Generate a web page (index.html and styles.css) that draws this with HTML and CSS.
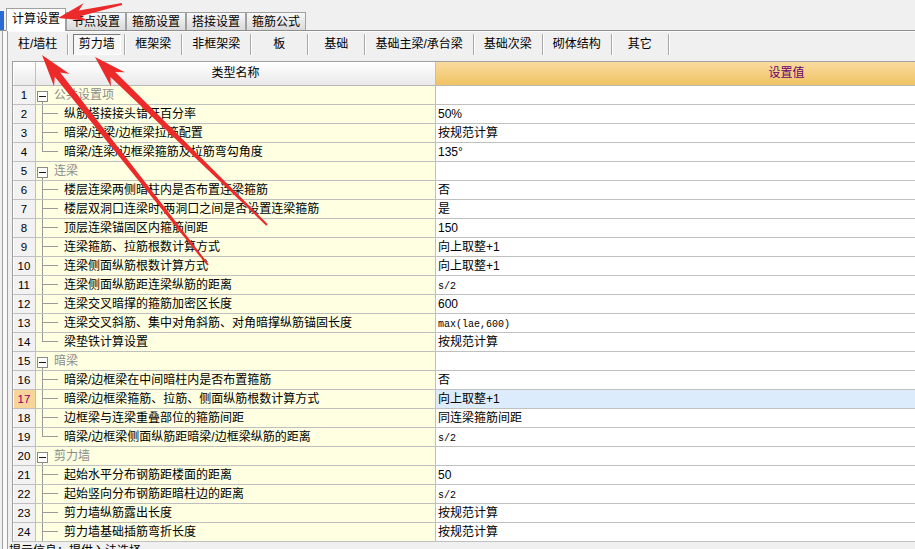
FILE: index.html
```html
<!DOCTYPE html>
<html lang="zh-CN">
<head>
<meta charset="utf-8">
<title>计算设置</title>
<link rel="stylesheet" href="styles.css">
</head>
<body>
<div class="topbar">
  <span class="selmark"></span>
  <div class="tab active">计算设置</div>
  <div class="tab">节点设置</div>
  <div class="tab">箍筋设置</div>
  <div class="tab">搭接设置</div>
  <div class="tab">箍筋公式</div>
</div>
<div class="main">
  <div class="sidebar"></div>
  <div class="content">
    <div class="subtabs">
      <div class="subtab">柱/墙柱</div>
      <div class="subtab btnwrap"><span class="pressed">剪力墙</span></div>
      <div class="subtab">框架梁</div>
      <div class="subtab">非框架梁</div>
      <div class="subtab">板</div>
      <div class="subtab">基础</div>
      <div class="subtab">基础主梁/承台梁</div>
      <div class="subtab">基础次梁</div>
      <div class="subtab">砌体结构</div>
      <div class="subtab">其它</div>
    </div>
    <div class="grid">
      <div class="row head"><div class="c num"></div><div class="c name">类型名称</div><div class="c val">设置值</div></div>

      <div class="row"><div class="c num">1</div><div class="c name group"><span class="box"></span><span class="gtext">公共设置项</span></div><div class="c val"></div></div>
      <div class="row"><div class="c num">2</div><div class="c name child">纵筋搭接接头错开百分率</div><div class="c val">50%</div></div>
      <div class="row"><div class="c num">3</div><div class="c name child">暗梁/连梁/边框梁拉筋配置</div><div class="c val">按规范计算</div></div>
      <div class="row"><div class="c num">4</div><div class="c name child last">暗梁/连梁/边框梁箍筋及拉筋弯勾角度</div><div class="c val">135°</div></div>

      <div class="row"><div class="c num">5</div><div class="c name group"><span class="box"></span><span class="gtext">连梁</span></div><div class="c val"></div></div>
      <div class="row"><div class="c num">6</div><div class="c name child">楼层连梁两侧暗柱内是否布置连梁箍筋</div><div class="c val">否</div></div>
      <div class="row"><div class="c num">7</div><div class="c name child">楼层双洞口连梁时,两洞口之间是否设置连梁箍筋</div><div class="c val">是</div></div>
      <div class="row"><div class="c num">8</div><div class="c name child">顶层连梁锚固区内箍筋间距</div><div class="c val">150</div></div>
      <div class="row"><div class="c num">9</div><div class="c name child">连梁箍筋、拉筋根数计算方式</div><div class="c val">向上取整+1</div></div>
      <div class="row"><div class="c num">10</div><div class="c name child">连梁侧面纵筋根数计算方式</div><div class="c val">向上取整+1</div></div>
      <div class="row"><div class="c num">11</div><div class="c name child">连梁侧面纵筋距连梁纵筋的距离</div><div class="c val"><span class="mono">s/2</span></div></div>
      <div class="row"><div class="c num">12</div><div class="c name child">连梁交叉暗撑的箍筋加密区长度</div><div class="c val">600</div></div>
      <div class="row"><div class="c num">13</div><div class="c name child">连梁交叉斜筋、集中对角斜筋、对角暗撑纵筋锚固长度</div><div class="c val"><span class="mono">max(lae,600)</span></div></div>
      <div class="row"><div class="c num">14</div><div class="c name child last">梁垫铁计算设置</div><div class="c val">按规范计算</div></div>

      <div class="row"><div class="c num">15</div><div class="c name group"><span class="box"></span><span class="gtext">暗梁</span></div><div class="c val"></div></div>
      <div class="row"><div class="c num">16</div><div class="c name child">暗梁/边框梁在中间暗柱内是否布置箍筋</div><div class="c val">否</div></div>
      <div class="row selected"><div class="c num">17</div><div class="c name child">暗梁/边框梁箍筋、拉筋、侧面纵筋根数计算方式</div><div class="c val">向上取整+1</div></div>
      <div class="row"><div class="c num">18</div><div class="c name child">边框梁与连梁重叠部位的箍筋间距</div><div class="c val">同连梁箍筋间距</div></div>
      <div class="row"><div class="c num">19</div><div class="c name child last">暗梁/边框梁侧面纵筋距暗梁/边框梁纵筋的距离</div><div class="c val"><span class="mono">s/2</span></div></div>

      <div class="row"><div class="c num">20</div><div class="c name group"><span class="box"></span><span class="gtext">剪力墙</span></div><div class="c val"></div></div>
      <div class="row"><div class="c num">21</div><div class="c name child">起始水平分布钢筋距楼面的距离</div><div class="c val">50</div></div>
      <div class="row"><div class="c num">22</div><div class="c name child">起始竖向分布钢筋距暗柱边的距离</div><div class="c val"><span class="mono">s/2</span></div></div>
      <div class="row"><div class="c num">23</div><div class="c name child">剪力墙纵筋露出长度</div><div class="c val">按规范计算</div></div>
      <div class="row"><div class="c num">24</div><div class="c name child">剪力墙基础插筋弯折长度</div><div class="c val">按规范计算</div></div>
    </div>
    <div class="status">提示信息：提供入法选择</div>
  </div>
</div>
<svg class="arrows" width="915" height="549" viewBox="0 0 915 549">
  <polygon points="121.8,3.0 78.9,10.4 83.5,3.2 58,18 87.3,20.8 80.1,16.2 122.2,5.0"/>
  <polygon points="208.8,264.4 60.2,72.4 69.6,73.9 42,55 54.0,86.3 54.8,76.8 207.2,265.6"/>
  <polygon points="267.7,224.3 115.3,72.0 124.9,72.2 95,57 110.9,86.6 110.5,77.0 266.3,225.7"/>
</svg>
</body>
</html>
```

FILE: styles.css
```css
html, body {
  margin: 0;
  padding: 0;
  overflow: hidden;
}

body {
  width: 915px;
  height: 549px;
  position: relative;
  background: #f0f0f0;
  font: 12px/18px "Liberation Sans", "Noto Sans CJK SC", sans-serif;
  color: #000;
}

/* top tab strip */
.topbar {
  display: flex;
  align-items: flex-end;
  height: 30px;
  border-bottom: 1px solid #8e8e8e;
}

.selmark {
  width: 4px;
  height: 19px;
  background: #2a6ad4;
  margin-right: 2px;
  flex: none;
}

.tab {
  flex: none;
  height: 17px;
  line-height: 18px;
  padding: 0 5px;
  border: 1px solid #a0a0a0;
  border-bottom: none;
  background: linear-gradient(#f7f7f7, #dadada);
}

.tab.active {
  height: 22px;
  line-height: 21px;
  background: #fff;
  margin-bottom: -1px;
  position: relative;
  z-index: 1;
}

/* main area */
.main {
  display: flex;
  height: 518px;
}

.sidebar {
  flex: none;
  width: 4px;
  margin-left: 2px;
  border-left: 1px solid #a0a0a0;
  border-right: 1px solid #a0a0a0;
  background: #f9f9f9;
}

.content {
  flex: 1;
  min-width: 0;
  display: flex;
  flex-direction: column;
}

/* sub tabs */
.subtabs {
  flex: none;
  height: 30px;
  box-sizing: border-box;
  border-top: 1px solid #fbfbfb;
  padding-bottom: 4px;
  display: flex;
  align-items: center;
}

.subtab {
  flex: none;
  height: 21px;
  line-height: 21px;
  min-width: 57px;
  box-sizing: border-box;
  padding: 0 10px;
  text-align: center;
  border-right: 1px solid #a8a8a8;
  box-shadow: 1px 0 0 #fff;
  white-space: nowrap;
}

.subtab.btnwrap {
  padding: 0 3px 0 4px;
}

.pressed {
  display: inline-block;
  height: 19px;
  line-height: 19px;
  padding: 0 5px;
  border: 1px solid;
  border-color: #7a7a7a #ffffff #ffffff #7a7a7a;
  background: #f7f7f7;
}

/* grid */
.grid {
  flex: none;
  width: 1125px;
  margin-left: 4px;
  border-left: 1px solid #a0a0a0;
  border-top: 1px solid #a0a0a0;
}

.row {
  display: grid;
  grid-template-columns: 23px 400px 702px;
  height: 19px;
}

.c {
  box-sizing: border-box;
  border-right: 1px solid #c0c0c0;
  border-bottom: 1px solid #c0c0c0;
  white-space: nowrap;
  overflow: hidden;
  line-height: 18px;
}

.num {
  text-align: center;
  font-size: 11.5px;
  background: #f2f2f2;
  box-shadow: inset 1px 0 0 #fff;
}

.name {
  background: #ffffe1;
}

.val {
  background: #fff;
  padding-left: 2px;
}

.mono {
  font-family: "Liberation Mono", monospace;
  font-size: 10px;
}

.row.head {
  height: 24px;
}

.head .c {
  line-height: 23px;
  text-align: center;
  border-bottom-color: #b8b8b8;
}

.head .num,
.head .name {
  background: linear-gradient(#ffffff, #e9e9e9);
}

.head .val {
  background: linear-gradient(#fadb9f, #f0c363);
  color: #6a0070;
  padding-left: 0;
}

.row.selected .num {
  background: #f8d49a;
  color: #80006a;
}

.row.selected .val {
  background: #ddecfc;
}

/* tree */
.group {
  display: flex;
  align-items: center;
  background: linear-gradient(#9a9a9a, #9a9a9a) 6px 100% / 1px 3px no-repeat, #ffffe1;
}

.box {
  flex: none;
  width: 11px;
  height: 11px;
  box-sizing: border-box;
  margin: 2px 6px 0 1px;
  border: 1px solid #8a8a8a;
  background: linear-gradient(#1a1a1a, #1a1a1a) center / 7px 1px no-repeat, #fff;
}

.gtext {
  color: #8c8c8c;
}

.child {
  padding-left: 28px;
  background:
    linear-gradient(#9a9a9a, #9a9a9a) 6px 0 / 1px 100% no-repeat,
    linear-gradient(#9a9a9a, #9a9a9a) 6px 8px / 16px 1px no-repeat,
    #ffffe1;
}

.child.last {
  background:
    linear-gradient(#9a9a9a, #9a9a9a) 6px 0 / 1px 9px no-repeat,
    linear-gradient(#9a9a9a, #9a9a9a) 6px 8px / 16px 1px no-repeat,
    #ffffe1;
}

.status {
  flex: none;
  padding-left: 1px;
  white-space: nowrap;
}

/* annotation arrows drawn over the screenshot */
.arrows {
  position: absolute;
  left: 0;
  top: 0;
  pointer-events: none;
  z-index: 5;
}

.arrows polygon {
  fill: #ec2a2a;
}
```
